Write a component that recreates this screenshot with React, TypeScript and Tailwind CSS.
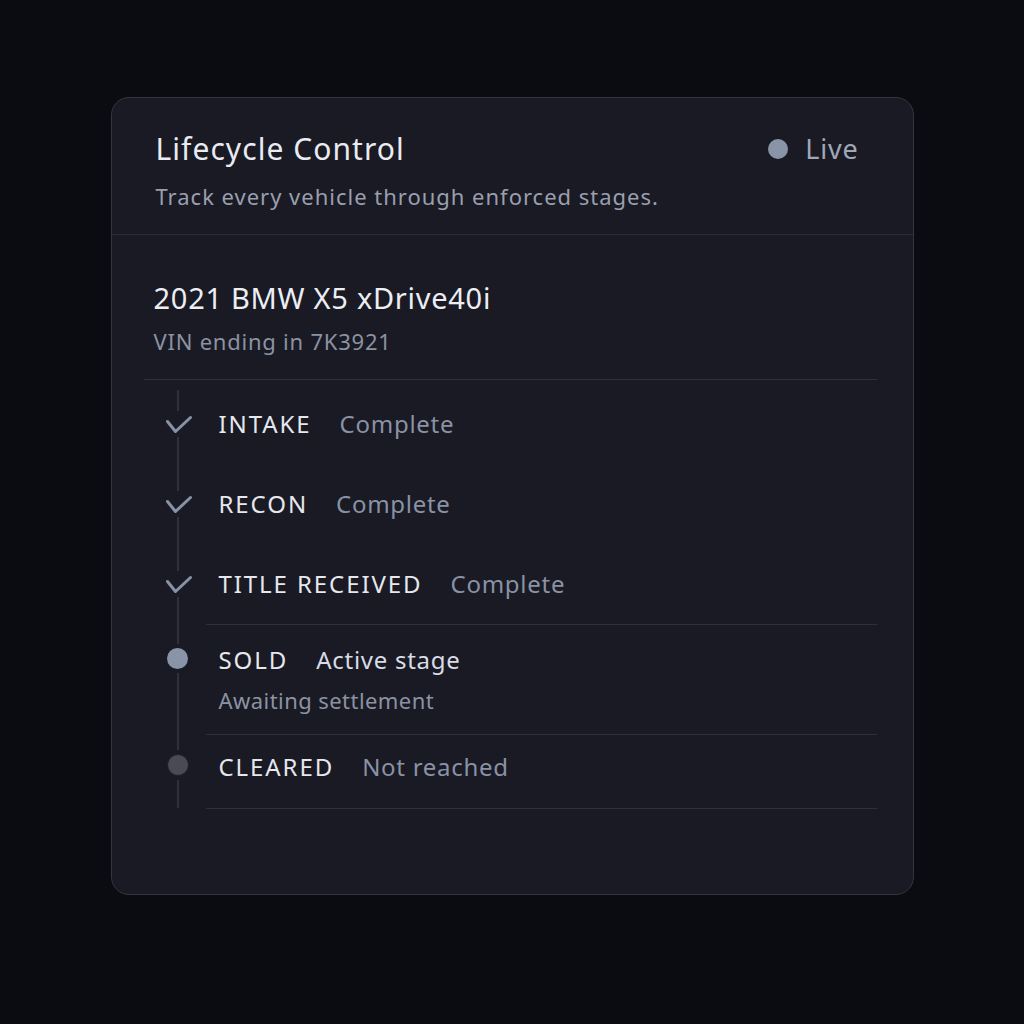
type Stage = {
  name: string
  status: string
  state: 'done' | 'active' | 'pending'
  note?: string
}

const stages: Stage[] = [
  { name: 'INTAKE', status: 'Complete', state: 'done' },
  { name: 'RECON', status: 'Complete', state: 'done' },
  { name: 'TITLE RECEIVED', status: 'Complete', state: 'done' },
  { name: 'SOLD', status: 'Active stage', state: 'active', note: 'Awaiting settlement' },
  { name: 'CLEARED', status: 'Not reached', state: 'pending' },
]

function StageIcon({ state }: { state: Stage['state'] }) {
  if (state === 'done') {
    return (
      <div className="flex h-[26px] w-[30px] items-center justify-center bg-[#191a24]">
        <svg width="29" height="21" viewBox="0 0 29 21" fill="none">
          <path d="M4.5 7.5 L12.5 17.5 L27.5 3.5" stroke="#8892a6" strokeWidth="3" strokeLinecap="round" strokeLinejoin="round" />
        </svg>
      </div>
    )
  }
  if (state === 'active') {
    return <div className="h-[21px] w-[21px] rounded-full bg-[#8a94a8] ring-4 ring-[#191a24]" />
  }
  return <div className="h-[22px] w-[22px] rounded-full border border-[#1f1f28] bg-[#4a4a56] ring-4 ring-[#191a24]" />
}

export default function App() {
  return (
    <div className="flex min-h-screen justify-center bg-[#0b0b12] pt-[97px]" style={{ fontFamily: '"Noto Sans", "Open Sans", sans-serif' }}>
      <div className="h-[798px] w-[803px] rounded-[18px] border border-[#34353f] bg-[#191a24]">
        {/* header */}
        <div className="flex items-start justify-between border-b border-[#2c2d38] pl-[44px] pr-[54px] pt-[32px] pb-[23px]">
          <div>
            <h1 className="text-[30px] leading-[38px] tracking-[0.035em] text-[#e9ebf1]">Lifecycle Control</h1>
            <p className="mt-[13px] text-[22px] leading-[30px] tracking-[0.045em] text-[#9a9fae]">Track every vehicle through enforced stages.</p>
          </div>
          <div className="mt-[3px] flex items-center gap-[17px]">
            <span className="h-[20px] w-[20px] rounded-full bg-[#8a94a8]" />
            <span className="text-[27px] leading-[32px] tracking-[0.03em] text-[#a0a7b7]">Live</span>
          </div>
        </div>

        {/* body */}
        <div className="pl-[32px] pr-[36px]">
          <div className="border-b border-[#2e2f3a] pl-[10px] pt-[44px] pb-[23px]">
            <h2 className="text-[29px] leading-[38px] tracking-[0.025em] text-[#eceef3]">2021 BMW X5 xDrive40i</h2>
            <p className="mt-[9px] text-[22px] leading-[30px] tracking-[0.035em] text-[#8c92a2]">VIN ending in 7K3921</p>
          </div>

          <div className="relative pt-[4px]">
            <div className="absolute left-[33px] top-[10px] h-[418px] w-[2px] bg-[#2f303b]" />
            {stages.map((s, i) => {
              const last = i === stages.length - 1
              return (
                <div key={s.name} className="relative flex">
                  <div
                    className={`flex w-[62px] justify-center pl-[6px] ${
                      s.state === 'done' ? 'items-center' : s.state === 'active' ? 'items-start pt-[24px]' : 'items-start pt-[20px]'
                    }`}
                  >
                    <StageIcon state={s.state} />
                  </div>
                  <div
                    className={`flex-1 pl-[13px] ${
                      s.state === 'done'
                        ? 'flex h-[80px] items-center'
                        : s.state === 'active'
                          ? 'h-[110px] border-t border-[#2e2f3a] pt-[19px]'
                          : 'h-[75px] border-t border-[#2e2f3a] pt-[16px]'
                    } ${last ? 'border-b' : ''}`}
                  >
                    <div className="flex items-baseline gap-[28px]">
                      <span className="text-[24px] leading-[32px] tracking-[0.08em] text-[#e6e8ee]">{s.name}</span>
                      <span
                        className={`text-[24px] leading-[32px] tracking-[0.03em] ${s.state === 'active' ? 'text-[#d9dce4]' : 'text-[#8a92a4]'}`}
                      >
                        {s.status}
                      </span>
                    </div>
                    {s.note && <p className="mt-[9px] text-[22px] leading-[30px] tracking-[0.02em] text-[#8c92a2]">{s.note}</p>}
                  </div>
                </div>
              )
            })}
          </div>
        </div>
      </div>
    </div>
  )
}
